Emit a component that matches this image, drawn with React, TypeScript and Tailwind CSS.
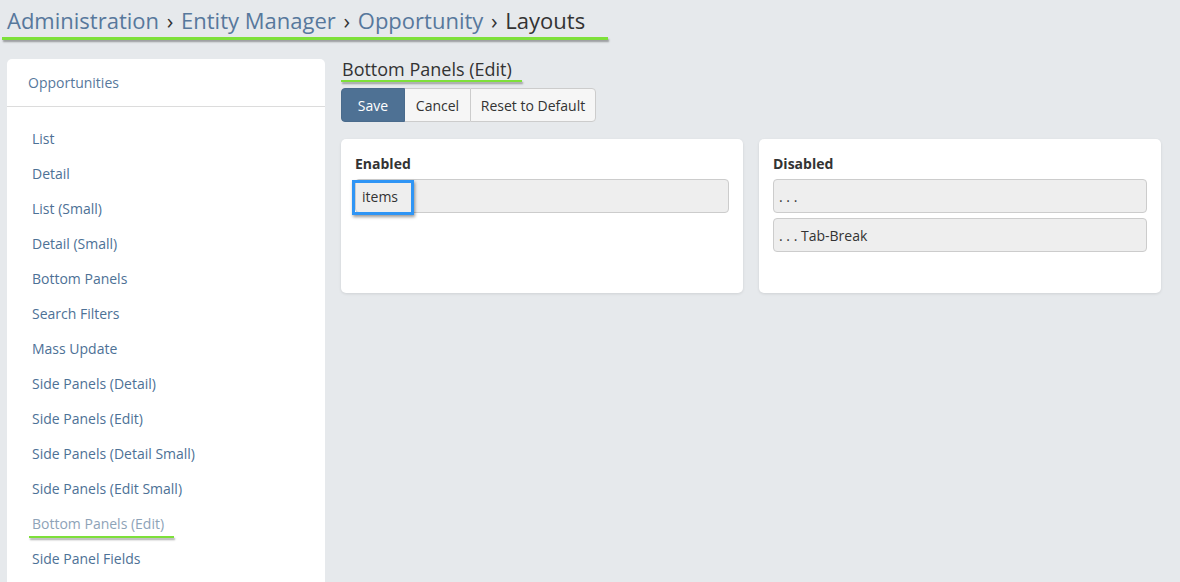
import React from "react";

const items = [
  "List",
  "Detail",
  "List (Small)",
  "Detail (Small)",
  "Bottom Panels",
  "Search Filters",
  "Mass Update",
  "Side Panels (Detail)",
  "Side Panels (Edit)",
  "Side Panels (Detail Small)",
  "Side Panels (Edit Small)",
  "Bottom Panels (Edit)",
  "Side Panel Fields",
];

function Sep() {
  return <span className="text-[#333] mx-[2px]">›</span>;
}

export default function App() {
  return (
    <div
      className="w-[1180px] h-[582px] overflow-hidden bg-[#e6e9ec] text-[#333]"
      style={{ fontFamily: '"Open Sans", "Noto Sans", sans-serif' }}
    >
      <div className="pt-[5px] pl-[2px]">
        <div className="pl-[5px] text-[22px] leading-[30px] text-[#57789c]">
          Administration <Sep /> Entity Manager <Sep /> Opportunity <Sep />{" "}
          <span className="text-[#333]">Layouts</span>
        </div>
        <div className="mt-[2px] h-[3px] w-[606px] bg-[#7ee03a] shadow-[1px_2px_2px_rgba(0,0,0,0.35)]" />
      </div>
      <div className="mt-[19px] flex gap-[16px] pl-[7px]">
        <div className="w-[318px] h-[600px] bg-white rounded-t-[5px]">
          <div className="h-[48px] flex items-center pl-[21px] text-[14px] text-[#57789c] border-b border-[#dcdcdc]">
            Opportunities
          </div>
          <div className="pt-[22px] pl-[25px] flex flex-col">
            {items.map((it) => {
              const active = it === "Bottom Panels (Edit)";
              return (
                <div key={it} className="h-[35px] text-[14px] leading-[20px]">
                  <div className={active ? "text-[#8ea3b8]" : "text-[#4d7196]"}>{it}</div>
                  {active && (
                    <div className="ml-[-3px] mt-[2px] h-[2px] w-[145px] bg-[#7ee03a] shadow-[1px_2px_2px_rgba(0,0,0,0.35)]" />
                  )}
                </div>
              );
            })}
          </div>
        </div>
        <div className="flex-1 pr-[19px]">
          <div>
            <div className="text-[18px] leading-[20px] text-[#333] ml-[1px]">Bottom Panels (Edit)</div>
            <div className="mt-[1px] h-[2px] w-[181px] bg-[#7ee03a] shadow-[1px_2px_2px_rgba(0,0,0,0.35)]" />
          </div>
          <div className="mt-[6px] flex h-[34px] text-[14px]">
            <div className="w-[64px] flex items-center justify-center bg-[#4e7194] text-white rounded-l-[4px] border border-[#4a6b8c]">
              Save
            </div>
            <div className="w-[65px] flex items-center justify-center bg-[#f6f6f6] text-[#333] border-y border-[#ccc]">
              Cancel
            </div>
            <div className="w-[126px] flex items-center justify-center bg-[#f6f6f6] text-[#333] border border-[#ccc] rounded-r-[4px]">
              Reset to Default
            </div>
          </div>
          <div className="mt-[17px] grid grid-cols-2 gap-[16px]">
            <div className="h-[154px] bg-white rounded-[5px] shadow-[0_1px_3px_rgba(0,0,0,0.1)] px-[14px] pt-[15px]">
              <div className="text-[14px] font-bold leading-[20px] text-[#333]">Enabled</div>
              <div className="mt-[5px] relative h-[34px] bg-[#eee] border border-[#ccc] rounded-[4px] flex items-center pl-[6px] text-[14px]">
                items
                <div className="absolute left-[-4px] top-[0px] w-[62px] h-[35px] border-[3px] border-[#2f95f5] shadow-[1px_2px_3px_rgba(0,0,0,0.4)]" />
              </div>
            </div>
            <div className="h-[154px] bg-white rounded-[5px] shadow-[0_1px_3px_rgba(0,0,0,0.1)] px-[14px] pt-[15px]">
              <div className="text-[14px] font-bold leading-[20px] text-[#333]">Disabled</div>
              <div className="mt-[5px] h-[34px] bg-[#eee] border border-[#ccc] rounded-[4px] flex items-center pl-[5px] text-[14px]">
                . . .
              </div>
              <div className="mt-[5px] h-[34px] bg-[#eee] border border-[#ccc] rounded-[4px] flex items-center pl-[5px] text-[14px]">
                . . . Tab-Break
              </div>
            </div>
          </div>
        </div>
      </div>
    </div>
  );
}
